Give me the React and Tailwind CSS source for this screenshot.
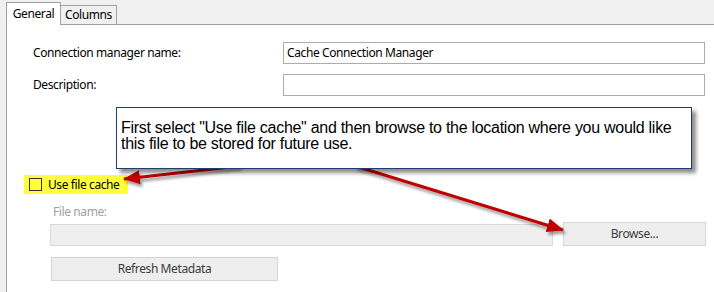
import React from 'react';

const ui = { fontFamily: '"Noto Sans", "Open Sans", sans-serif' };

const App = () => {
  return (
    <div className="relative w-[714px] h-[292px] overflow-hidden bg-[#f0f0f0] text-[12px] tracking-[-0.4px] text-black" style={ui}>
      {/* Tabs */}
      <div className="flex items-end h-[25px] pl-[6px]">
        <div className="relative z-10 h-[23px] w-[55px] bg-white border border-b-0 border-[#a0a0a0] flex items-center justify-center">
          General
        </div>
        <div className="h-[19px] w-[57px] -ml-px mb-px bg-[#f0f0f0] border border-b-0 border-[#a0a0a0] flex items-center justify-center">
          Columns
        </div>
      </div>

      {/* Panel */}
      <div className="ml-[6px] -mt-px h-[268px] bg-white border-t border-l border-[#a0a0a0]">
        <div className="pt-[17px] pl-[26px] flex flex-col gap-[10px]">
          <div className="flex items-center">
            <span className="w-[250px]">Connection manager name:</span>
            <div className="w-[422px] h-[22px] border border-[#acacac] flex items-center pl-[3px]">
              Cache Connection Manager
            </div>
          </div>
          <div className="flex items-center">
            <span className="w-[250px]">Description:</span>
            <div className="w-[422px] h-[22px] border border-[#acacac]"></div>
          </div>
        </div>

        {/* Use file cache */}
        <div className="mt-[79px] ml-[17px] w-[104px] h-[19px] bg-[#ffff3c] flex items-center">
          <span className="ml-[5px] w-[13px] h-[13px] border border-[#333]"></span>
          <span className="ml-[6px]">Use file cache</span>
        </div>

        <div className="mt-[10px] ml-[46px] text-[#a0a0a0] leading-[16px]">File name:</div>
        <div className="mt-[2px] ml-[43px] flex items-end gap-[10px]">
          <div className="w-[503px] h-[22px] bg-[#efefef] border border-[#d9d9d9]"></div>
          <div className="w-[143px] h-[24px] bg-[#eeeeee] border border-[#d5d5d5] flex items-center justify-center text-[#3c3c3c]">
            Browse...
          </div>
        </div>
        <div className="mt-[11px] ml-[44px] w-[227px] h-[24px] bg-[#eeeeee] border border-[#d5d5d5] flex items-center justify-center text-[#3c3c3c]">
          Refresh Metadata
        </div>
      </div>

      {/* Arrows */}
      <svg className="absolute inset-0 pointer-events-none" width="714" height="292" viewBox="0 0 714 292">
        <defs>
          <filter id="sh" x="-20%" y="-50%" width="140%" height="200%">
            <feDropShadow dx="2" dy="3" stdDeviation="1.5" floodColor="#000" floodOpacity="0.4" />
          </filter>
          <marker id="head" markerUnits="userSpaceOnUse" markerWidth="18" markerHeight="14" refX="16" refY="7" orient="auto">
            <path d="M0 0 L17 7 L0 14 Z" fill="#c00000" />
          </marker>
        </defs>
        <g filter="url(#sh)">
          <line x1="240" y1="166" x2="124" y2="179" stroke="#c00000" strokeWidth="3" markerEnd="url(#head)" />
          <line x1="355" y1="166" x2="563" y2="230" stroke="#c00000" strokeWidth="3" markerEnd="url(#head)" />
        </g>
      </svg>

      {/* Callout */}
      <div
        className="absolute left-[116px] top-[107px] w-[576px] h-[62px] bg-white border border-[#1f3d6e] shadow-[4px_4px_4px_rgba(0,0,0,0.45)] pt-[12px] pl-[4px] text-[16px] leading-[16px] tracking-[-0.28px] whitespace-nowrap text-black"
        style={{ fontFamily: '"Liberation Sans", Arial, sans-serif' }}
      >
        First select "Use file cache" and then browse to the location where you would like
        <br />
        this file to be stored for future use.
      </div>
    </div>
  );
};

export default App;
